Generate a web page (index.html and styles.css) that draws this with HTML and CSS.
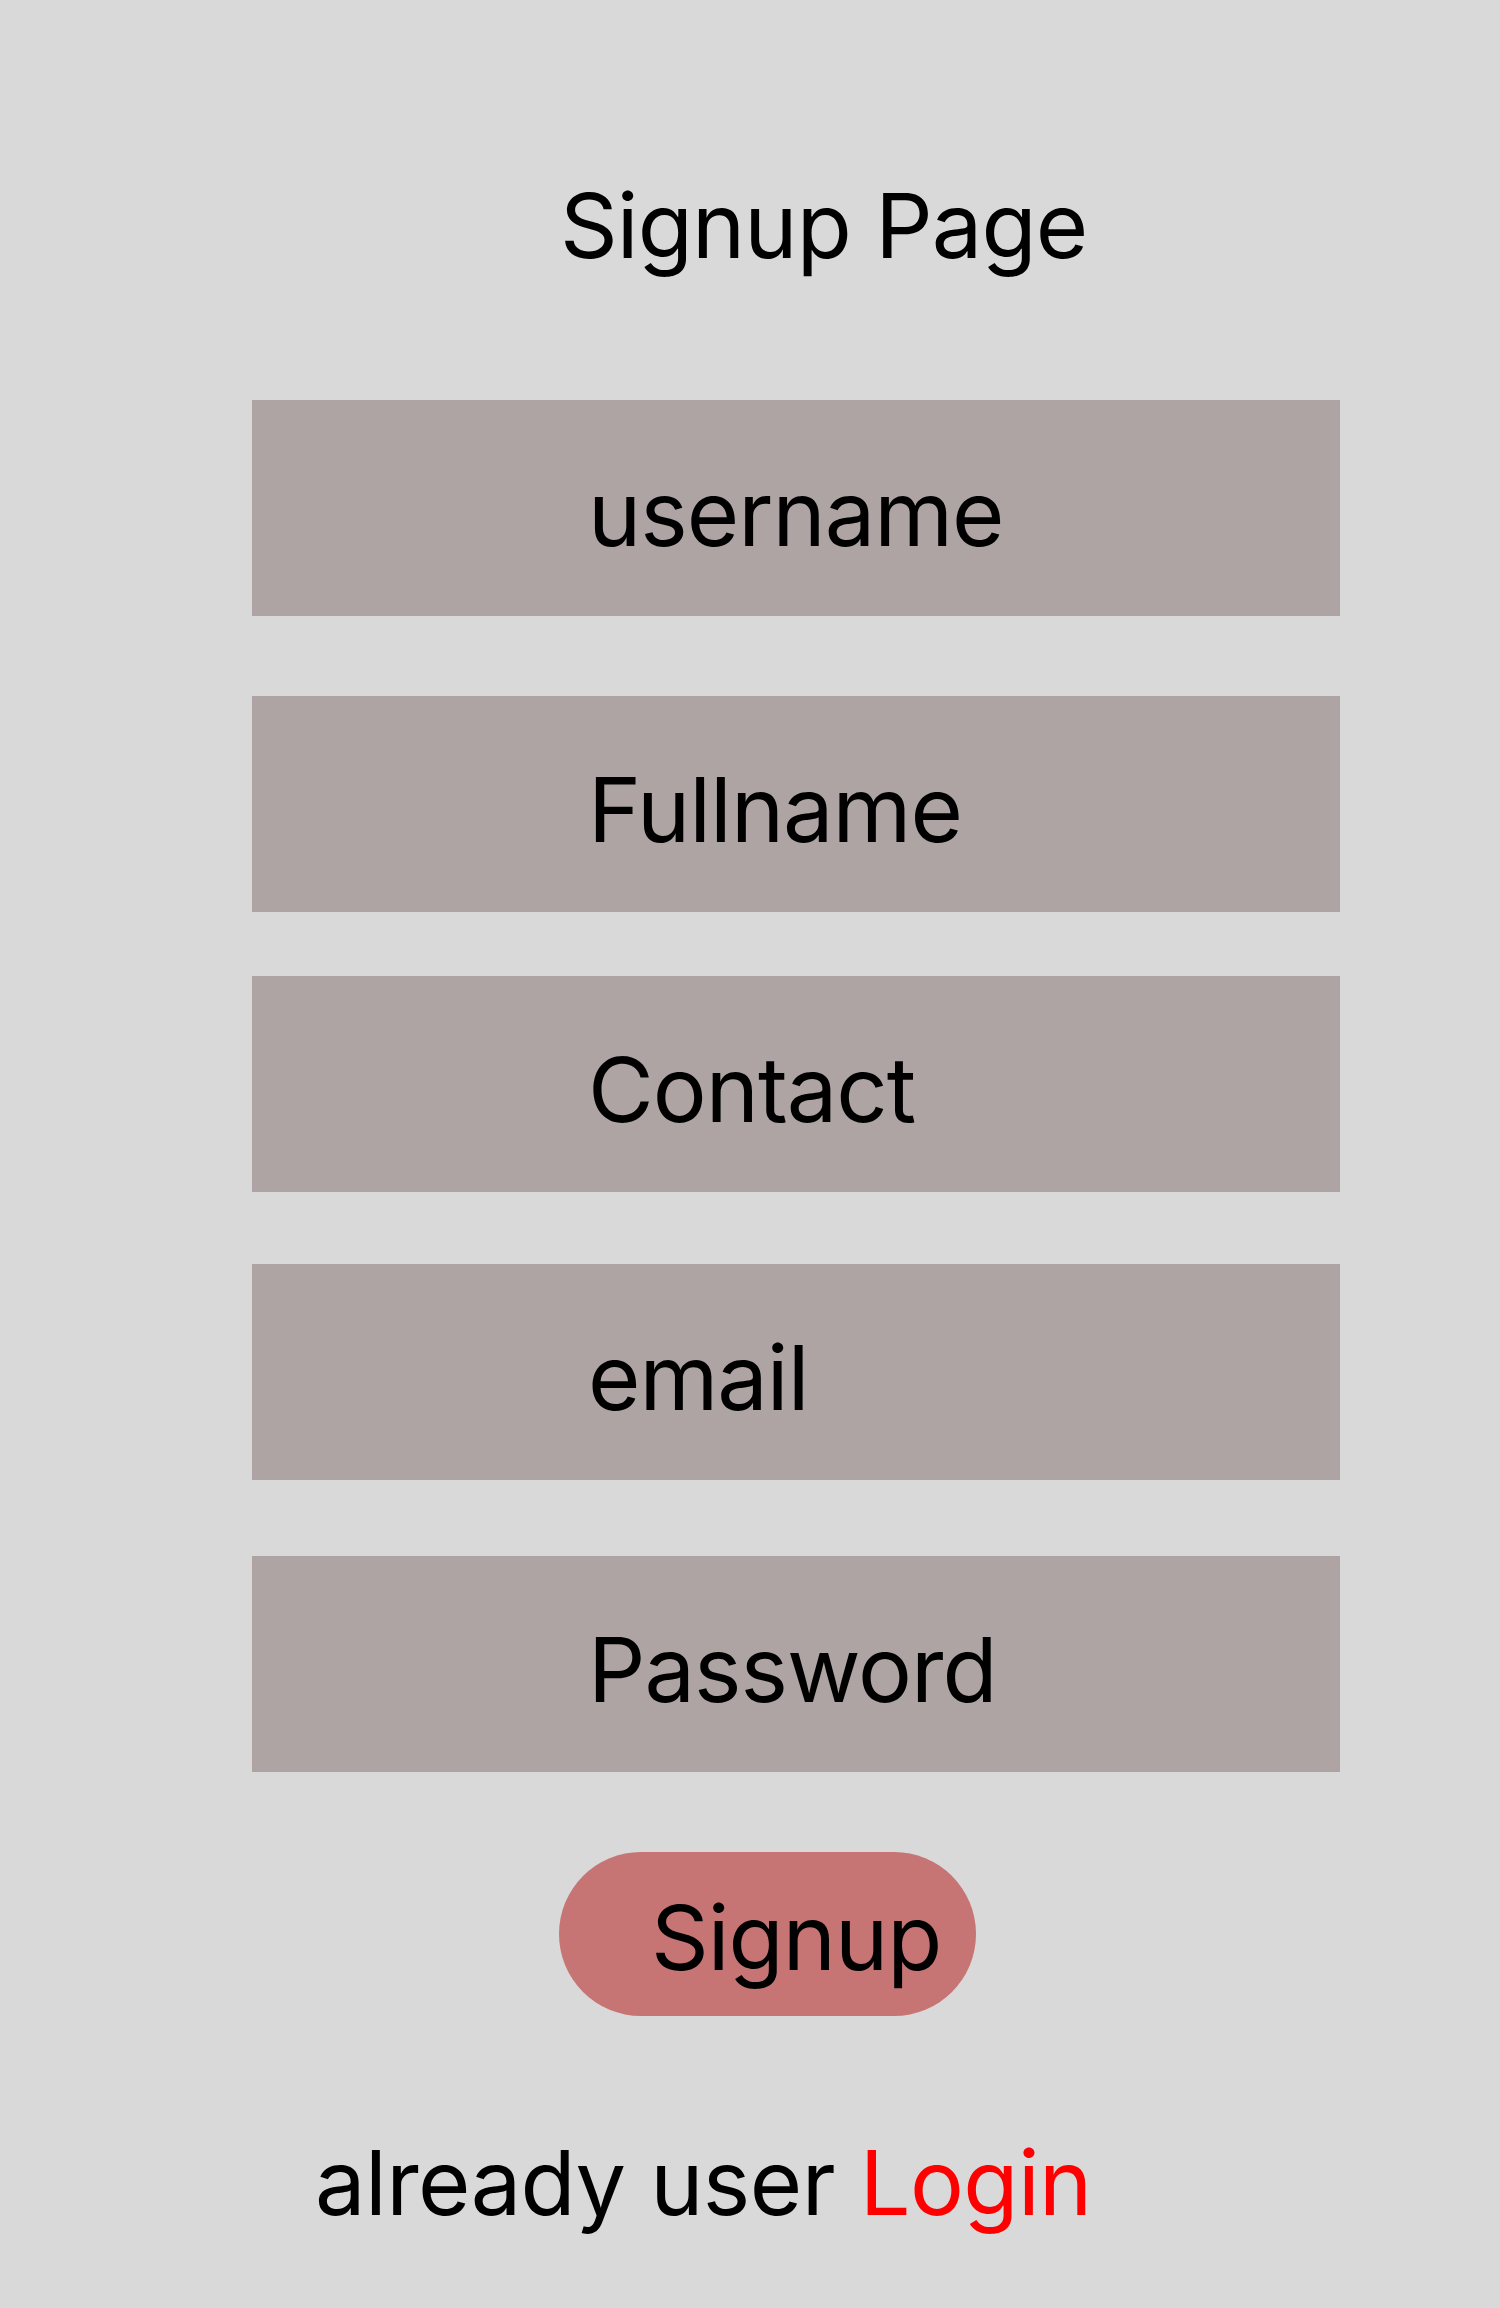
FILE: index.html
```html
<!DOCTYPE html>
<html lang="en">
<head>
<meta charset="utf-8">
<title>Signup Page</title>
<link rel="stylesheet" href="styles.css">
</head>
<body>
<main class="page">
  <h1 class="title">Signup Page</h1>
  <form class="form">
    <div class="field field-1">username</div>
    <div class="field field-2">Fullname</div>
    <div class="field field-3">Contact</div>
    <div class="field field-4">email</div>
    <div class="field field-5">Password</div>
    <button type="button" class="btn">Signup</button>
  </form>
  <p class="footer">already user <a class="login" href="#">Login</a></p>
</main>
</body>
</html>
```

FILE: styles.css
```css
html, body {
  margin: 0;
  padding: 0;
  background: #d9d9d9;
}
body {
  font-family: Inter, "Noto Sans", sans-serif;
  color: #000;
  min-height: 2308px;
}
.page {
  display: flex;
  flex-direction: column;
  padding-top: 171px;
}
.title {
  margin: 0 0 0 560px;
  font-size: 90px;
  font-weight: 400;
  line-height: normal;
  letter-spacing: -0.9px;
}
.form {
  display: flex;
  flex-direction: column;
  align-items: flex-start;
  margin: 0;
}
.field {
  box-sizing: border-box;
  width: 1088px;
  height: 216px;
  margin-left: 252px;
  padding: 10px 0 0 336px;
  background: #ada4a3;
  display: flex;
  align-items: center;
  font-size: 90px;
  letter-spacing: -1px;
  line-height: normal;
}
.field-1 { margin-top: 120px; }
.field-2 { margin-top: 80px; }
.field-3 { margin-top: 64px; }
.field-4 { margin-top: 72px; }
.field-5 { margin-top: 76px; }
.btn {
  box-sizing: border-box;
  margin: 80px 0 0 559px;
  width: 417px;
  height: 164px;
  border: none;
  border-radius: 82px;
  background: #c77474;
  display: flex;
  align-items: center;
  padding: 6px 0 0 92px;
  font-family: Inter, "Noto Sans", sans-serif;
  font-size: 90px;
  letter-spacing: -1px;
  line-height: normal;
  color: #000;
}
.footer {
  margin: 112px 0 0 315px;
  font-size: 90px;
  letter-spacing: -0.6px;
  line-height: normal;
}
.login {
  color: #ff0000;
  text-decoration: none;
}
```
